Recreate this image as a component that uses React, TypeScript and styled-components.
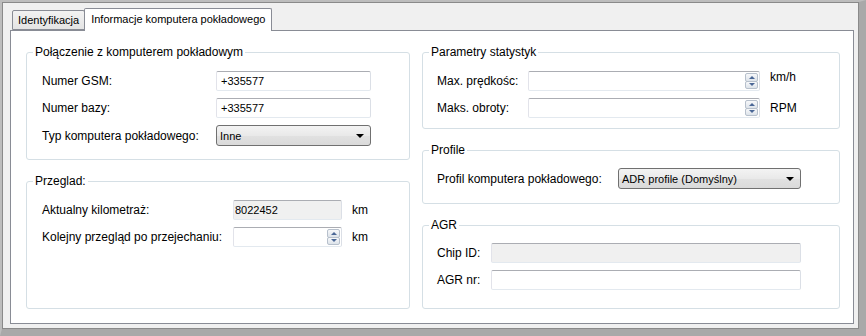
import React from 'react';
import styled, { createGlobalStyle } from 'styled-components';

const GlobalStyle = createGlobalStyle`
  html, body {
    margin: 0;
    padding: 0;
  }
  body {
    font-family: "Liberation Sans", Arial, sans-serif;
    font-size: 12px;
    color: #000;
  }
  * {
    box-sizing: border-box;
  }
`;

const Window = styled.div`
  width: 866px;
  height: 336px;
  display: flex;
  border-style: solid;
  border-width: 2px 7px 7px 2px;
  border-color: #bdbdbd #a9a9a9 #a9a9a9 #bdbdbd;
`;

const Frame = styled.div`
  flex: 1;
  display: flex;
  flex-direction: column;
  padding: 5px 4px 4px 7px;
  background: #f0f0f0;
  border: 1px solid #8a8a8a;
`;

const TabStrip = styled.div`
  position: relative;
  z-index: 1;
  display: flex;
  align-items: flex-end;
  height: 22px;
  padding-left: 2px;
`;

const Tab = styled.div<{ $active?: boolean }>`
  display: flex;
  align-items: center;
  height: ${({ $active }) => ($active ? '23px' : '20px')};
  margin-bottom: ${({ $active }) => ($active ? '-1px' : '0')};
  padding: ${({ $active }) => ($active ? '0 6px 2px' : '0 5px')};
  font-size: 11px;
  white-space: nowrap;
  border: 1px solid #898c95;
  border-bottom: ${({ $active }) => ($active ? 'none' : '1px solid #898c95')};
  border-radius: 2px 2px 0 0;
  background: ${({ $active }) => ($active ? '#fff' : 'linear-gradient(#f2f2f2, #e4e4e4)')};
  & + & {
    margin-left: -1px;
  }
`;

const Panel = styled.div`
  flex: 1;
  display: grid;
  grid-template-columns: 384px 418px;
  column-gap: 12px;
  padding: 14px 13px 14px 15px;
  background: #fff;
  border: 1px solid #898c95;
`;

const Column = styled.div`
  display: flex;
  flex-direction: column;
  gap: 14px;
`;

const Group = styled.fieldset<{ $grow?: boolean }>`
  margin: 0;
  padding: 0;
  min-width: 0;
  border: 1px solid #d5dfe5;
  border-radius: 3px;
  flex: ${({ $grow }) => ($grow ? 1 : 'none')};
`;

const Title = styled.legend`
  margin-left: 6px;
  padding: 0 2px;
  line-height: 15px;
  font-size: 12px;
`;

const Body = styled.div<{ $pad: string }>`
  display: flex;
  flex-direction: column;
  gap: 7px;
  padding: ${({ $pad }) => $pad};
`;

const Row = styled.div<{ $tall?: boolean }>`
  display: flex;
  align-items: center;
  height: ${({ $tall }) => ($tall ? '21px' : '20px')};
`;

const Label = styled.label<{ $width: number; $right?: boolean; $gap?: number }>`
  flex: none;
  width: ${({ $width }) => $width}px;
  margin-right: ${({ $gap = 0 }) => $gap}px;
  text-align: ${({ $right }) => ($right ? 'right' : 'left')};
  white-space: nowrap;
  line-height: 14px;
`;

const TextBox = styled.input<{ $width: number; $inset?: number }>`
  flex: none;
  width: ${({ $width }) => $width}px;
  height: 20px;
  padding: 0 ${({ $inset = 4 }) => $inset}px;
  border: 1px solid;
  border-color: #abadb3 #dbdfe6 #e3e9ef #e2e3ea;
  border-radius: 2px;
  background: #fff;
  font: 11px "Liberation Sans", Arial, sans-serif;
  color: #000;
  outline: none;
  &[readonly] {
    background: #f0f0f0;
  }
`;

const SpinBox = styled.div<{ $width: number }>`
  flex: none;
  display: flex;
  width: ${({ $width }) => $width}px;
  height: 20px;
  padding: 1px;
  border: 1px solid;
  border-color: #abadb3 #dbdfe6 #e3e9ef #e2e3ea;
  border-radius: 2px;
  background: #fff;
  input {
    flex: 1;
    min-width: 0;
    padding: 0 2px;
    border: 0;
    outline: none;
    background: transparent;
    font: 11px "Liberation Sans", Arial, sans-serif;
  }
`;

const Spinner = styled.div`
  flex: none;
  display: flex;
  flex-direction: column;
  width: 13px;
`;

const SpinButton = styled.span<{ $down?: boolean }>`
  flex: 1;
  display: flex;
  align-items: center;
  justify-content: center;
  border: 1px solid #b7c0cc;
  border-radius: 2px;
  background: linear-gradient(#f7f8fa, #dde3ea);
  & + & {
    margin-top: -1px;
  }
  &::after {
    content: '';
    border-left: 3px solid transparent;
    border-right: 3px solid transparent;
    ${({ $down }) => ($down ? 'border-top' : 'border-bottom')}: 3px solid #4a6796;
  }
`;

const ComboBox = styled.div<{ $width: number }>`
  flex: none;
  display: flex;
  align-items: center;
  justify-content: space-between;
  width: ${({ $width }) => $width}px;
  height: 21px;
  padding: 0 6px 0 3px;
  border: 1px solid #707070;
  border-radius: 3px;
  background: linear-gradient(#f3f3f3, #e9e9e9 50%, #e1e1e1 51%, #dadada);
  font-size: 11px;
  white-space: nowrap;
  &::after {
    content: '';
    border-left: 4px solid transparent;
    border-right: 4px solid transparent;
    border-top: 4px solid #000;
  }
`;

const Unit = styled.span<{ $top?: boolean }>`
  margin-left: 10px;
  line-height: 14px;
  align-self: ${({ $top }) => ($top ? 'flex-start' : 'center')};
  margin-top: ${({ $top }) => ($top ? '-1px' : '0')};
`;

const Spin = ({ width }: { width: number }): JSX.Element => (
  <SpinBox $width={width}>
    <input defaultValue="" />
    <Spinner>
      <SpinButton />
      <SpinButton $down />
    </Spinner>
  </SpinBox>
);

const App = (): JSX.Element => {
  return (
    <>
      <GlobalStyle />
      <Window>
        <Frame>
          <TabStrip>
            <Tab>Identyfikacja</Tab>
            <Tab $active>Informacje komputera pokładowego</Tab>
          </TabStrip>
          <Panel>
            <Column>
              <Group>
                <Title>Połączenie z komputerem pokładowym</Title>
                <Body $pad="11px 0 13px 15px">
                  <Row>
                    <Label $width={174}>Numer GSM:</Label>
                    <TextBox $width={155} defaultValue="+335577" />
                  </Row>
                  <Row>
                    <Label $width={174}>Numer bazy:</Label>
                    <TextBox $width={155} defaultValue="+335577" />
                  </Row>
                  <Row $tall>
                    <Label $width={174}>Typ komputera pokładowego:</Label>
                    <ComboBox $width={155}>Inne</ComboBox>
                  </Row>
                </Body>
              </Group>
              <Group $grow>
                <Title>Przeglad:</Title>
                <Body $pad="11px 0 0 15px">
                  <Row>
                    <Label $width={191}>Aktualny kilometraż:</Label>
                    <TextBox $width={109} $inset={1} readOnly defaultValue="8022452" />
                    <Unit>km</Unit>
                  </Row>
                  <Row>
                    <Label $width={191}>Kolejny przegląd po przejechaniu:</Label>
                    <Spin width={109} />
                    <Unit>km</Unit>
                  </Row>
                </Body>
              </Group>
            </Column>
            <Column>
              <Group>
                <Title>Parametry statystyk</Title>
                <Body $pad="11px 0 10px 14px">
                  <Row>
                    <Label $width={91}>Max. prędkośc:</Label>
                    <Spin width={232} />
                    <Unit $top>km/h</Unit>
                  </Row>
                  <Row>
                    <Label $width={91}>Maks. obroty:</Label>
                    <Spin width={232} />
                    <Unit>RPM</Unit>
                  </Row>
                </Body>
              </Group>
              <Group>
                <Title>Profile</Title>
                <Body $pad="10px 0 14px 14px">
                  <Row $tall>
                    <Label $width={181}>Profil komputera pokładowego:</Label>
                    <ComboBox $width={183}>ADR profile (Domyślny)</ComboBox>
                  </Row>
                </Body>
              </Group>
              <Group $grow>
                <Title>AGR</Title>
                <Body $pad="10px 0 0 14px">
                  <Row>
                    <Label $width={42} $right $gap={12}>Chip ID:</Label>
                    <TextBox $width={310} readOnly defaultValue="" />
                  </Row>
                  <Row>
                    <Label $width={42} $right $gap={12}>AGR nr:</Label>
                    <TextBox $width={310} defaultValue="" />
                  </Row>
                </Body>
              </Group>
            </Column>
          </Panel>
        </Frame>
      </Window>
    </>
  );
};

export default App;
